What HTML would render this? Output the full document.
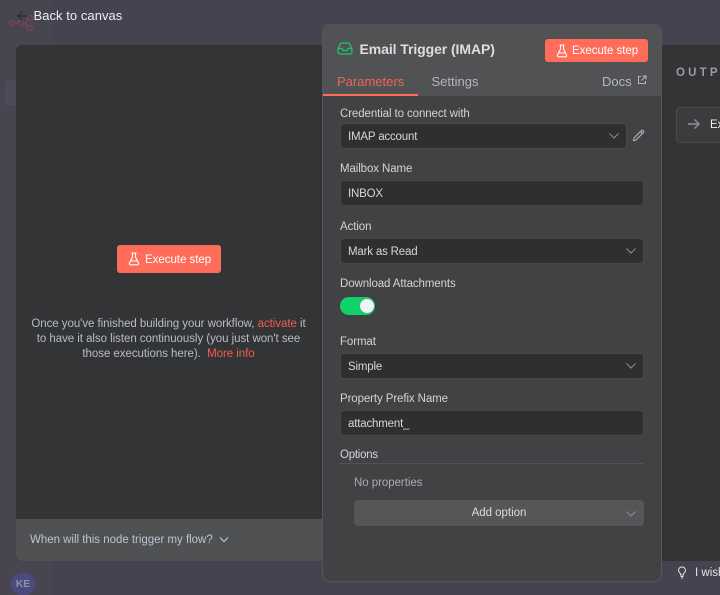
<!DOCTYPE html>
<html><head><meta charset="utf-8"><style>
html,body{margin:0;padding:0;width:720px;height:595px;overflow:hidden}
body{position:relative;background:#45434f;font-family:"Liberation Sans",sans-serif;color:#d6d7da}
#r{position:absolute;left:0;top:0;width:720px;height:595px;overflow:hidden;filter:blur(.3px)}
.a{position:absolute;white-space:nowrap}
.lab{position:absolute;left:340px;font-size:11.5px;line-height:14px;color:#d2d3d5;letter-spacing:-.1px;white-space:nowrap}
.inp{position:absolute;left:340px;width:302px;height:24px;background:#2e2f2f;border:1px solid #47484a;border-radius:4px;font-size:11.5px;line-height:26px;text-indent:7px;color:#d6d7d8;letter-spacing:-.18px}
.chev{position:absolute;width:12px;height:8px}
.btn{position:absolute;background:#ff6d5a;border-radius:3px;color:#fff;font-size:11.5px;letter-spacing:-.03px}
</style></head><body><div id="r">
<div class="a" style="left:0;top:0;width:52px;height:595px;background:#47454f"></div>
<div class="a" style="left:5px;top:80px;width:11px;height:25px;background:#4d4b57;border-radius:4px 0 0 4px"></div>
<svg class="a" style="left:8px;top:8px" width="30" height="24" fill="none" stroke="#7a4058" stroke-width="1.500"><circle cx="4.500" cy="15" r="2.500"/><circle cx="13" cy="15" r="2.500"/><circle cx="22" cy="10" r="2.500"/><circle cx="22" cy="20" r="2.500"/><path d="M7 15h3.500M15.500 15h1.500c2 0 1-4 3-5M17 15c2 0 1 4 3 5"/></svg>
<svg class="a" style="left:16px;top:9px" width="14" height="14" fill="none" stroke="#2a2a30" stroke-width="1.200"><path d="M12 7H2M6.500 2.500 2 7l4.500 4.500"/></svg>
<div class="a" style="left:33.500px;top:8px;font-size:13px;line-height:15px;color:#eeeef0;letter-spacing:.05px">Back to canvas</div>

<div class="a" style="left:16px;top:45px;width:320px;height:516px;background:#333436;border-radius:6px 0 0 6px"></div>
<div class="a" style="left:16px;top:519px;width:320px;height:42px;background:#505153;border-radius:0 0 0 6px"></div>
<div class="a" style="left:650px;top:45px;width:70px;height:516px;background:#333436"></div>

<div class="btn" style="left:117px;top:245px;width:104px;height:28px;line-height:30px;text-indent:28px">Execute step</div>
<svg class="a" style="left:128px;top:252px" width="12" height="14" fill="none" stroke="#fff" stroke-width="1.100"><path d="M3.500 1h5M4.500 1v4L1.500 11c-.5 1 0 1.800 1 1.800h7c1 0 1.500-.8 1-1.800L7.500 5V1M3 9h6"/></svg>
<div class="a" style="left:26px;top:317px;width:285px;text-align:center;font-size:11.500px;line-height:15px;color:#b9bcc4;letter-spacing:-.05px;white-space:normal">Once you've finished building your workflow, <span style="color:#ef5f4e">activate</span> it<br>to have it also listen continuously (you just won't see<br>those executions here).&nbsp; <span style="color:#ef5f4e">More info</span></div>
<div class="a" style="left:30px;top:532px;font-size:11.500px;line-height:16px;color:#bcc3d0;letter-spacing:-.02px">When will this node trigger my flow?</div>
<svg class="chev" style="left:218px;top:536px" fill="none" stroke="#bcc3d0" stroke-width="1.200"><path d="M2 1.500 6 5.500 10 1.500"/></svg>
<div class="a" style="left:11px;top:572px;width:24px;height:24px;border-radius:50%;background:#4a4a7c;color:#8f8fa6;font-size:10.500px;font-weight:bold;line-height:24px;text-align:center">KE</div>

<div class="a" style="left:676px;top:65px;font-size:11.500px;font-weight:bold;color:#9a9ca0;letter-spacing:3.200px;line-height:16px">OUTPUT</div>
<div class="a" style="left:676px;top:107px;width:60px;height:34px;background:#3b3c3e;border:1px solid #4a4b4d;border-radius:4px"></div>
<svg class="a" style="left:687px;top:118px" width="14" height="12" fill="none" stroke="#909296" stroke-width="1.400"><path d="M1 6h11M7.500 1.500 12 6l-4.500 4.500"/></svg>
<div class="a" style="left:710px;top:117px;font-size:11.500px;line-height:16px;color:#eee">Ex</div>
<svg class="a" style="left:676px;top:566px" width="12" height="14" fill="none" stroke="#e0e0e4" stroke-width="1"><path d="M6 1a3.300 3.300 0 0 0-2 6c.5.500.5 1 .5 2h3c0-1 0-1.500.5-2a3.300 3.300 0 0 0-2-6ZM4.500 10.500h3M5 12h2"/></svg>
<div class="a" style="left:695px;top:566px;font-size:11.500px;line-height:15px;color:#e4e4e8">I wish</div>

<div class="a" style="left:322px;top:24px;width:338px;height:556px;background:#414244;border:1px solid #55565a;border-radius:7px;overflow:hidden">
<div style="position:absolute;left:0;top:0;width:338px;height:71px;background:#515254"></div>
<div style="position:absolute;left:0;top:69px;width:95px;height:2px;background:#ff6d5a"></div>
</div>
<svg class="a" style="left:337px;top:42px" width="16" height="13" fill="none" stroke="#1fc16b" stroke-width="1.300"><path d="M1 7 3 2.500C3.400 1.500 4 1 5 1h6c1 0 1.600.5 2 1.500L15 7v2.500c0 1.500-1 2.500-2.500 2.500h-9C2 12 1 11 1 9.500ZM1 6.500h4l1 2h4l1-2h4"/></svg>
<div class="a" style="left:359.500px;top:41px;font-size:14px;line-height:17px;font-weight:bold;color:#dcdddf;letter-spacing:-.08px">Email Trigger (IMAP)</div>
<div class="btn" style="left:545px;top:39px;width:103px;height:23px;line-height:25px;text-indent:27px">Execute step</div>
<svg class="a" style="left:556px;top:44px" width="12" height="14" fill="none" stroke="#fff" stroke-width="1.100"><path d="M3.500 1h5M4.500 1v4L1.500 11c-.5 1 0 1.800 1 1.800h7c1 0 1.500-.8 1-1.800L7.500 5V1M3 9h6"/></svg>
<div class="a" style="left:337px;top:74px;font-size:13px;line-height:15px;color:#ef6555">Parameters</div>
<div class="a" style="left:431.500px;top:74px;font-size:13px;line-height:15px;color:#b4b7bd">Settings</div>
<div class="a" style="left:602px;top:74px;font-size:13px;line-height:15px;color:#b4b7bd">Docs</div>
<svg class="a" style="left:637px;top:75px" width="10" height="10" fill="none" stroke="#b4b7bd" stroke-width="1"><path d="M4 1.500H1.500v7h7V6M5.500 1H9v3.500M9 1 4.500 5.500"/></svg>

<div class="lab" style="top:107px">Credential to connect with</div>
<div class="inp" style="top:123px;width:285px">IMAP account</div>
<svg class="chev" style="left:608px;top:132px" fill="none" stroke="#8d8f92" stroke-width="1"><path d="M1.500 1.500 6 6 10.500 1.500"/></svg>
<svg class="a" style="left:632px;top:129px" width="13" height="13" fill="none" stroke="#b9bbbf" stroke-width="1"><path d="M1.500 11.500 2 9 9.500 1.500c.5-.5 1-.5 1.500 0l.5.5c.5.500.5 1 0 1.500L4 11ZM8.500 2.500l2 2"/></svg>

<div class="lab" style="top:162px">Mailbox Name</div>
<div class="inp" style="top:180px">INBOX</div>
<div class="lab" style="top:220px">Action</div>
<div class="inp" style="top:238px">Mark as Read</div>
<svg class="chev" style="left:625px;top:247px" fill="none" stroke="#8d8f92" stroke-width="1"><path d="M1.500 1.500 6 6 10.500 1.500"/></svg>
<div class="lab" style="top:277px">Download Attachments</div>
<div class="a" style="left:340px;top:297px;width:35px;height:18px;border-radius:9px;background:#13d16a"></div>
<div class="a" style="left:360px;top:299px;width:14px;height:14px;border-radius:50%;background:#f1f1f6"></div>
<div class="lab" style="top:335px">Format</div>
<div class="inp" style="top:353px">Simple</div>
<svg class="chev" style="left:625px;top:362px" fill="none" stroke="#8d8f92" stroke-width="1"><path d="M1.500 1.500 6 6 10.500 1.500"/></svg>
<div class="lab" style="top:392px">Property Prefix Name</div>
<div class="inp" style="top:410px">attachment_</div>
<div class="lab" style="top:448px;letter-spacing:-.25px">Options</div>
<div class="a" style="left:340px;top:463px;width:304px;height:1px;background:#515255"></div>
<div class="a" style="left:354px;top:476px;font-size:11.500px;line-height:14px;color:#a9abb0;letter-spacing:-.05px">No properties</div>
<div class="a" style="left:354px;top:500px;width:290px;height:26px;background:#555658;border-radius:4px;text-align:center;font-size:11.500px;line-height:27px;color:#dcdddf;letter-spacing:-.03px">Add option</div>
<svg class="chev" style="left:625px;top:510px" fill="none" stroke="#8d8f92" stroke-width="1"><path d="M1.500 1.500 6 6 10.500 1.500"/></svg>
</div></body></html>
